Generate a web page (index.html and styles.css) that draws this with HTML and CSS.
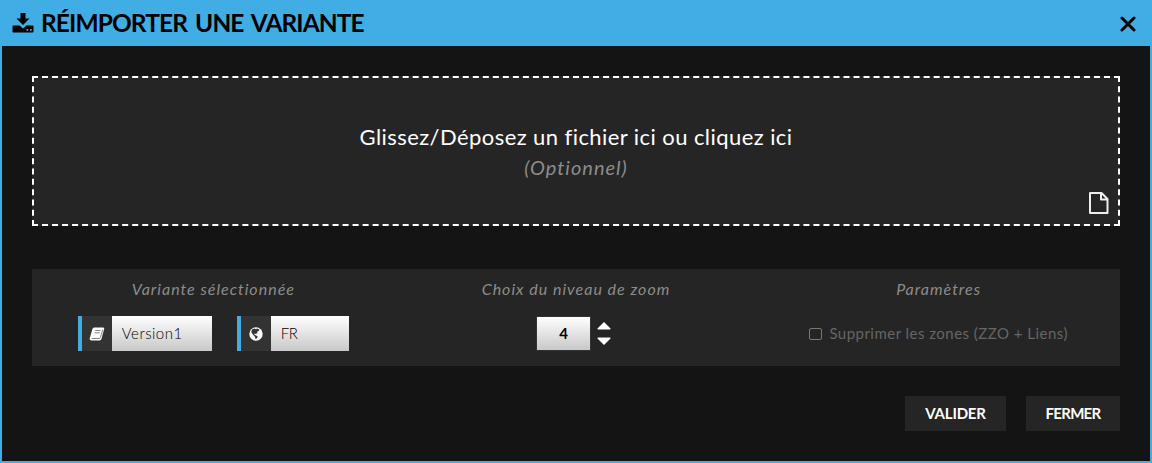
FILE: index.html
```html
<!DOCTYPE html>
<html lang="fr">
<head>
    <meta charset="UTF-8">
    <meta name="viewport" content="width=device-width, initial-scale=1.0">
    <title>Réimporter une variante</title>
    <link rel="stylesheet" href="styles.css">
</head>
<body>
    <div class="popup">
        <div class="popup-header">
            <svg class="icon-import" width="22" height="22" viewBox="0 0 22 22">
                <path d="M8.500 1h5v5.500h4L11 13 4.500 6.500h4z"/>
                <path fill-rule="evenodd" d="M1.500 13.500h6l3.500 3 3.500-3h6q1 0 1 1v5q0 1-1 1h-19q-1 0-1-1v-5q0-1 1-1zM14.500 17v1.700h1.700V17zM18 17v1.700h1.700V17z"/>
            </svg>
            <h1>RÉIMPORTER UNE VARIANTE</h1>
            <svg class="icon-close" width="16" height="16" viewBox="0 0 16 16">
                <path d="M2 2l12 12M14 2L2 14"/>
            </svg>
        </div>
        <div class="popup-content">
            <div class="dropzone">
                <p class="drop-text">Glissez/Déposez un fichier ici ou cliquez ici</p>
                <p class="drop-optional">(Optionnel)</p>
                <svg class="icon-file" width="20" height="22" viewBox="0 0 20 22">
                    <path d="M1 1h11.500l6 6v14H1zM12 1v6.500h6.500"/>
                </svg>
            </div>
            <div class="options">
                <div class="option">
                    <h2>Variante sélectionnée</h2>
                    <div class="fields">
                        <div class="field">
                            <span class="field-icon">
                                <svg width="16" height="14" viewBox="0 0 16 14">
                                    <path class="book" d="M5.200.5h9q1.300.2 1 1.500l-2.700 9.800q-.5 1.600-2 1.600H2.200Q.3 13.200.7 11.500L3.400 2Q3.900.6 5.200.5z"/>
                                    <path class="book-lines" d="M6.300 3.500h5.200M5.600 5.800h5.200M2.600 11.500h7.600q.8 0 1.100-.8L13.800 2.500"/>
                                </svg>
                            </span>
                            <span class="field-value version">Version1</span>
                        </div>
                        <div class="field">
                            <span class="field-icon">
                                <svg width="14" height="14" viewBox="0 0 14 14">
                                    <circle cx="7" cy="7" r="6.700" fill="#fff"/>
                                    <path fill="#333" d="M3 2.600L5.500 1.600l1.500.7 1-.8 2.300.9-.5 1.600-1.600.5.200 1.500L6.800 7l-1.300-.4-.4 1L7 8.500l1.600.8-.3 1.500-1.700 1.500-.6-2.500L3.800 7.600 2.300 5z"/>
                                </svg>
                            </span>
                            <span class="field-value lang">FR</span>
                        </div>
                    </div>
                </div>
                <div class="option">
                    <h2>Choix du niveau de zoom</h2>
                    <div class="stepper">
                        <span class="stepper-value">4</span>
                        <span class="arrows">
                            <svg width="14" height="8" viewBox="0 0 14 8"><path d="M7 0l6.500 6.500q.3 1-.7 1H1.200Q.2 7.500.5 6.500z"/></svg>
                            <svg width="14" height="8" viewBox="0 0 14 8"><path d="M7 8L.5 1.500Q.2.500 1.200.5h11.600q1 0 .7 1z"/></svg>
                        </span>
                    </div>
                </div>
                <div class="option">
                    <h2>Paramètres</h2>
                    <div class="check">
                        <span class="checkbox"></span>
                        <span class="check-text">Supprimer les zones (ZZO + Liens)</span>
                    </div>
                </div>
            </div>
            <div class="actions">
                <button class="btn-validate">VALIDER</button>
                <button class="btn-close">FERMER</button>
            </div>
        </div>
    </div>
</body>
</html>
```
FILE: styles.css
```css
* {
    box-sizing: border-box;
}
body {
    margin: 0;
    font-family: "Century Gothic", Lato, sans-serif;
    color: #fff;
}
h1, h2, p {
    margin: 0;
    white-space: nowrap;
}
.popup {
    height: 463px;
    background: #141414;
    border: 2px solid #40ade5;
    border-top: none;
}
.popup-header {
    display: flex;
    align-items: center;
    height: 46px;
    padding: 0 14px 0 10px;
    background: #40ade5;
    color: #000;
}
.icon-import {
    margin: 0 7px 0 0;
}
h1 {
    font-size: 24.5px;
    font-weight: 700;
    line-height: 48px;
    letter-spacing: -0.9px;
    word-spacing: 3px;
}
.icon-close {
    margin: 2px 0 0 auto;
    fill: none;
    stroke: #000;
    stroke-width: 3;
    stroke-linecap: round;
}
.popup-content {
    padding: 30px;
}
.dropzone {
    position: relative;
    height: 150px;
    padding-top: 43px;
    background: #252525;
    border: 2px dashed #fff;
    text-align: center;
}
.drop-text {
    font-size: 22px;
    line-height: 32px;
    letter-spacing: 0.43px;
}
.drop-optional {
    font-size: 20px;
    font-style: italic;
    line-height: 28px;
    letter-spacing: 1px;
    color: #8c8c8c;
}
.icon-file {
    position: absolute;
    right: 9px;
    bottom: 10px;
    fill: none;
    stroke: #eee;
    stroke-width: 2;
    stroke-linejoin: round;
}
.options {
    display: grid;
    grid-template-columns: repeat(3, 1fr);
    height: 97px;
    margin-top: 43px;
    background: #252525;
}
.option {
    display: flex;
    flex-direction: column;
    align-items: center;
}
h2 {
    height: 47px;
    font-size: 16px;
    font-weight: 400;
    font-style: italic;
    line-height: 39px;
    letter-spacing: 1px;
    color: #8c8c8c;
}
.fields {
    display: flex;
    gap: 25px;
}
.field {
    display: flex;
    height: 35px;
    border-left: 4px solid #40ade5;
}
.field-icon {
    display: flex;
    align-items: center;
    justify-content: center;
    width: 30px;
    background: #333;
}
.field-icon svg {
    flex: none;
}
.book {
    fill: #fff;
}
.book-lines {
    fill: none;
    stroke: #777;
    stroke-width: 0.9;
}
.field-value {
    padding-left: 10px;
    font-size: 15px;
    font-weight: 300;
    line-height: 35px;
    letter-spacing: 0.5px;
    color: #000;
    background: linear-gradient(#fff, #c8c8c8);
}
.version {
    width: 100px;
}
.lang {
    width: 78px;
    letter-spacing: -0.5px;
}
.stepper {
    display: flex;
    align-items: center;
    gap: 6px;
    height: 35px;
    margin-right: 5px;
}
.stepper-value {
    width: 55px;
    height: 35px;
    border: 1px solid #333;
    background: linear-gradient(#fff, #c8c8c8);
    font-size: 15px;
    font-weight: 700;
    line-height: 33px;
    text-align: center;
    color: #000;
}
.arrows {
    display: flex;
    flex-direction: column;
    gap: 7px;
}
.arrows svg {
    display: block;
}
.arrows path {
    fill: #fff;
}
.check {
    display: flex;
    align-items: center;
    gap: 7px;
    height: 35px;
    color: #666;
}
.checkbox {
    width: 13px;
    height: 12px;
    border: 1px solid #777;
    border-radius: 2px;
}
.check-text {
    font-size: 15px;
    line-height: 35px;
    letter-spacing: 0.47px;
    white-space: nowrap;
}
.actions {
    display: flex;
    justify-content: flex-end;
    gap: 20px;
    margin-top: 30px;
}
button {
    height: 35px;
    padding: 0 0 1px;
    border: none;
    background: #252525;
    color: #fff;
    font-family: inherit;
    font-size: 15px;
    font-weight: 700;
}
.btn-validate {
    width: 101px;
    letter-spacing: -0.2px;
}
.btn-close {
    width: 94px;
    letter-spacing: -0.7px;
}
```
